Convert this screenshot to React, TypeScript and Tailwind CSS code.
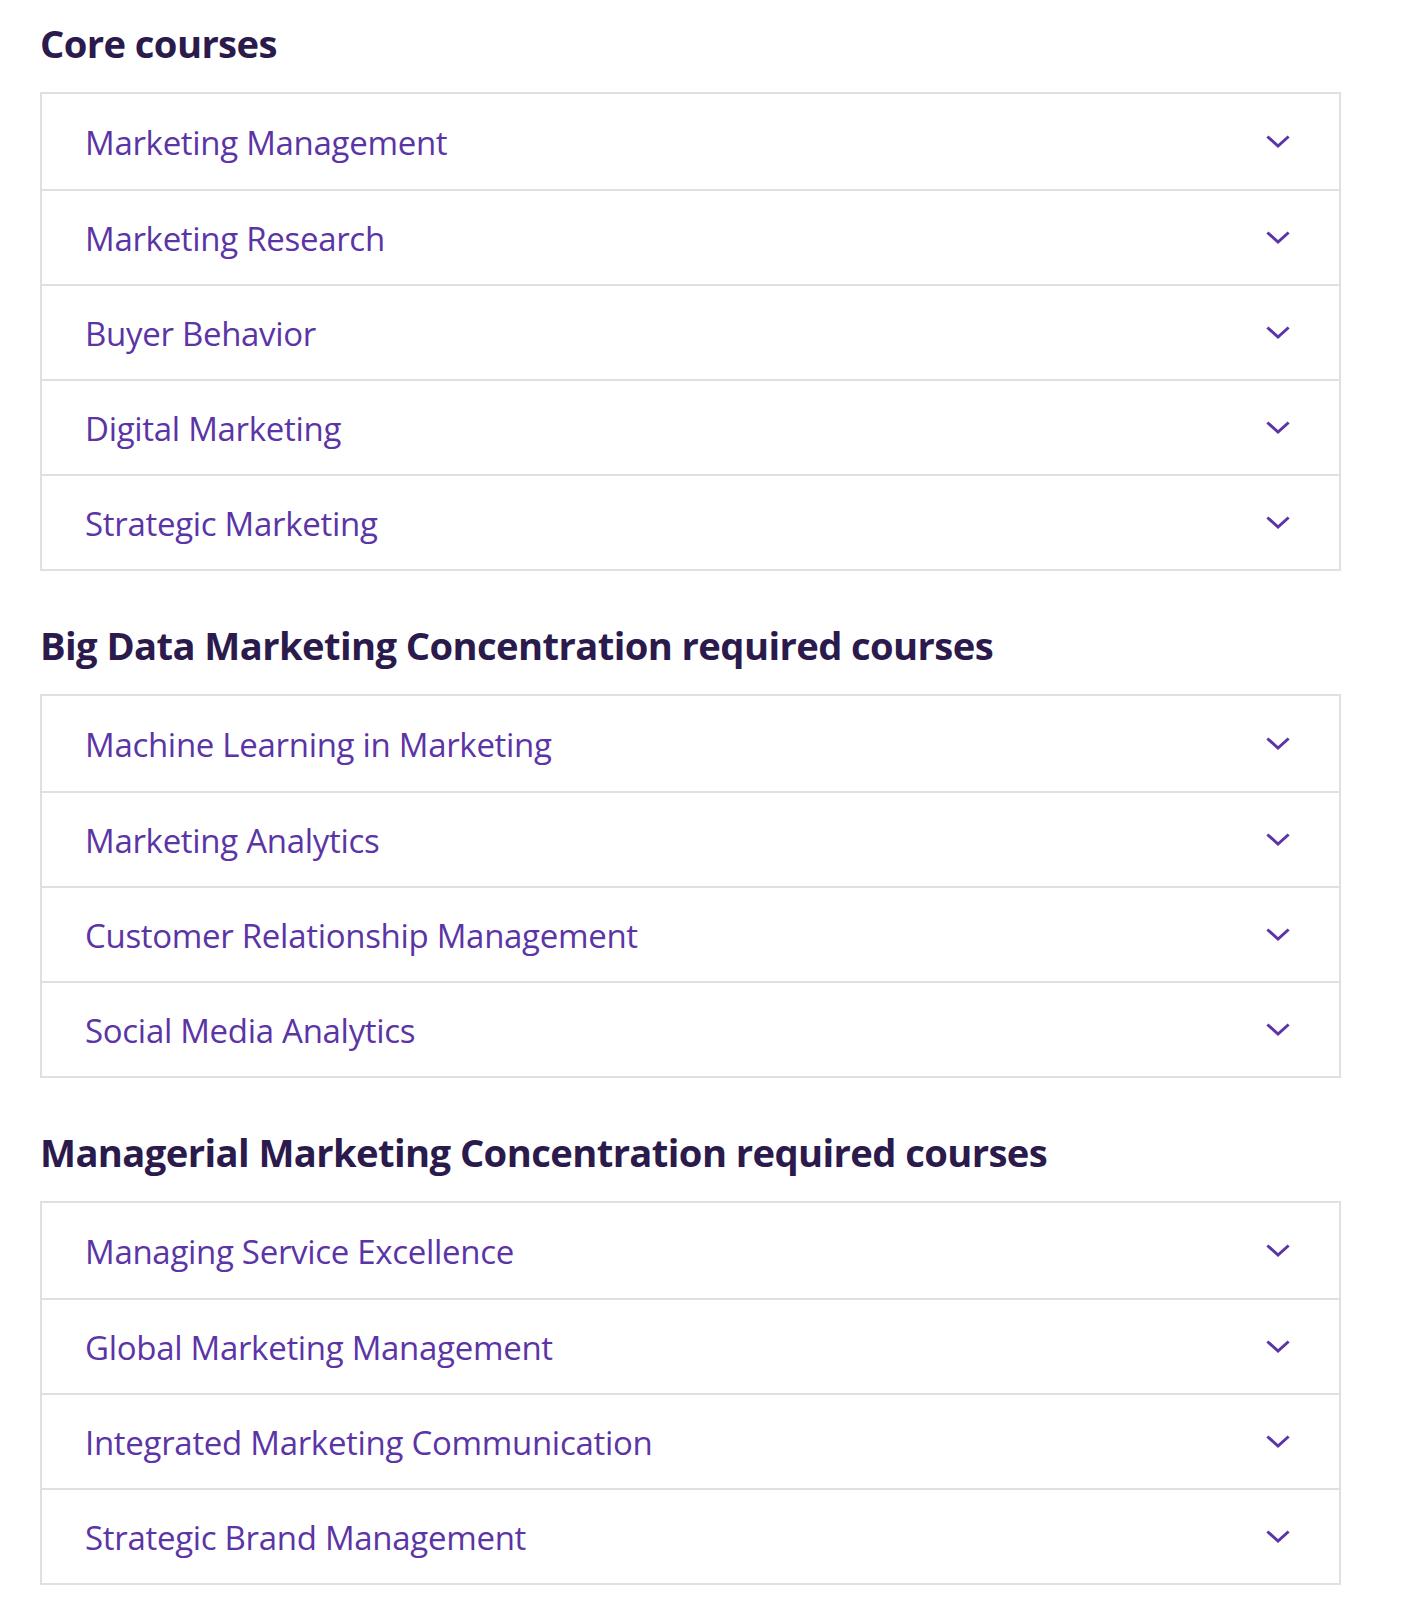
import React from "react";

const sections = [
  {
    title: "Core courses",
    items: [
      "Marketing Management",
      "Marketing Research",
      "Buyer Behavior",
      "Digital Marketing",
      "Strategic Marketing",
    ],
  },
  {
    title: "Big Data Marketing Concentration required courses",
    items: [
      "Machine Learning in Marketing",
      "Marketing Analytics",
      "Customer Relationship Management",
      "Social Media Analytics",
    ],
  },
  {
    title: "Managerial Marketing Concentration required courses",
    items: [
      "Managing Service Excellence",
      "Global Marketing Management",
      "Integrated Marketing Communication",
      "Strategic Brand Management",
    ],
  },
];

function Chevron() {
  return (
    <svg width="24" height="16" viewBox="0 0 24 16" fill="none" className="shrink-0">
      <path d="M2.5 3.5 L12 12 L21.5 3.5" stroke="#5b34a6" strokeWidth="3" strokeLinecap="square" />
    </svg>
  );
}

export default function App() {
  return (
    <div
      className="w-[1424px] min-h-[1598px] bg-white pl-[40px] pt-[19px]"
      style={{ fontFamily: '"Open Sans", "Noto Sans", sans-serif' }}
    >
      {sections.map((s, i) => (
        <div key={i} className={i === 0 ? "" : "mt-[50px]"}>
          <h2 className="text-[38.2px] leading-[48px] font-bold text-[#2b1a4c] tracking-[-0.6px]">
            {s.title}
          </h2>
          <div className="mt-[25px] border-2 border-[#e0e0e0] w-[1301px]">
            {s.items.map((it, j) => (
              <div
                key={j}
                className={`flex items-center justify-between h-[95px] pl-[43px] pr-[49px] ${
                  j > 0 ? "border-t-2 border-[#e0e0e0]" : ""
                }`}
              >
                <span className="pt-[3px] text-[33px] text-[#5b34a6] tracking-[-0.3px]">{it}</span>
                <Chevron />
              </div>
            ))}
          </div>
        </div>
      ))}
    </div>
  );
}
